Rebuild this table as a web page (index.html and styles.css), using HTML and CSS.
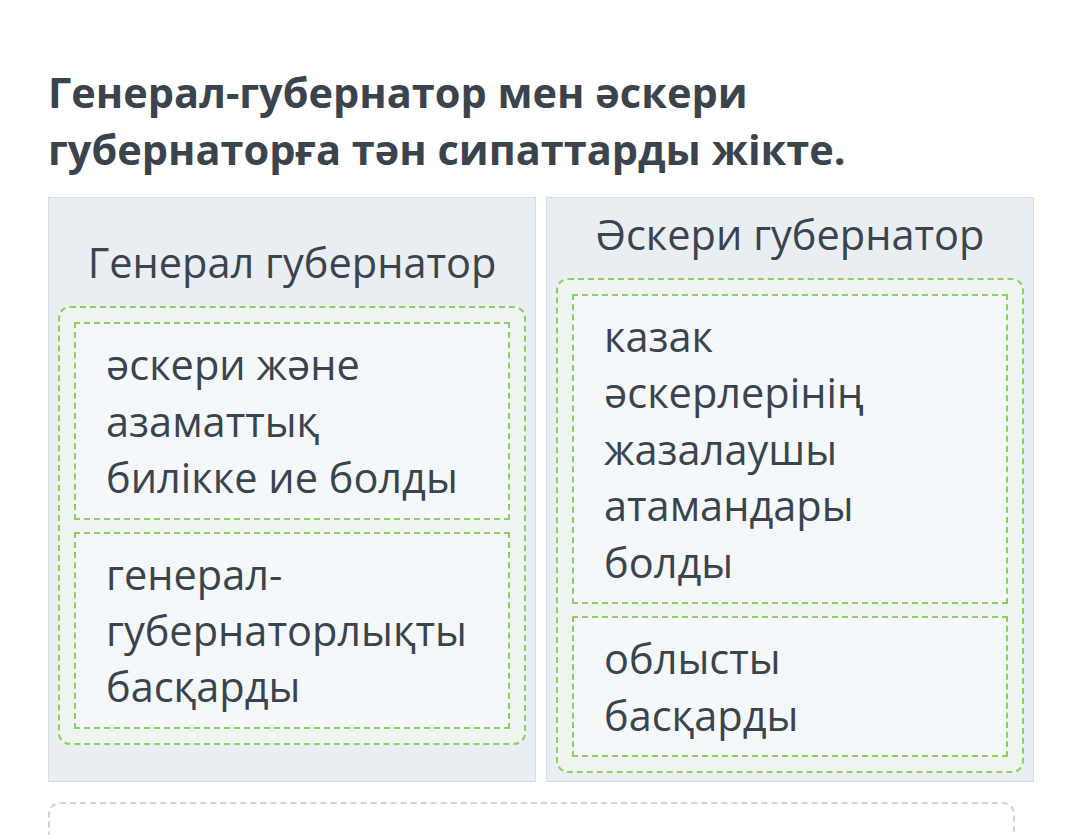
FILE: index.html
```html
<!DOCTYPE html>
<html lang="kk">
  <head>
    <meta charset="UTF-8" />
    <meta name="viewport" content="width=device-width, initial-scale=1.0" />
    <title>Жікте</title>
    <link rel="stylesheet" href="styles.css">
  </head>
  <body>
    <div class="page">
      <h1 class="question">Генерал-губернатор мен әскери губернаторға тән сипаттарды жікте.</h1>

      <div class="groups">
        <div class="group">
          <div class="group-title">Генерал губернатор</div>
          <div class="dropzone">
            <div class="card">әскери және азаматтық билікке ие болды</div>
            <div class="card">генерал-губернаторлықты басқарды</div>
          </div>
        </div>

        <div class="group">
          <div class="group-title">Әскери губернатор</div>
          <div class="dropzone">
            <div class="card">казак әскерлерінің жазалаушы атамандары болды</div>
            <div class="card">облысты басқарды</div>
          </div>
        </div>
      </div>

      <div class="pool"></div>
    </div>
  </body>
</html>
```

FILE: styles.css
```css
body {
  margin: 0;
  background-color: #fff;
  font-family: "Open Sans", "Noto Sans", sans-serif;
  color: #3b444c;
  overflow: hidden;
}
.page {
  padding: 64px 46px 0 48px;
}
.question {
  font-size: 41.5px;
  font-weight: 700;
  line-height: 57px;
  margin: 0 0 19px 0;
  max-width: 840px;
}
.groups {
  display: grid;
  grid-template-columns: 1fr 1fr;
  gap: 10px;
  height: 585px;
}
.group {
  display: flex;
  flex-direction: column;
  justify-content: center;
  background-color: #e8eef1;
  border: 1px solid #d6dde2;
  padding: 0 9px;
}
.group-title {
  font-size: 41.5px;
  line-height: 56px;
  text-align: center;
  padding-bottom: 16px;
}
.dropzone {
  display: flex;
  flex-direction: column;
  gap: 12px;
  padding: 14px;
  border: 2px dashed #8fcf60;
  border-radius: 12px;
  background-color: #eef5f1;
}
.card {
  font-size: 41.5px;
  line-height: 56.4px;
  padding: 12px 38px 12px 30px;
  border: 2px dashed #8fcf60;
  background-color: #f4f8fb;
}
.pool {
  margin-top: 20px;
  width: 963px;
  height: 60px;
  border: 2px dashed #cfd5d9;
  border-radius: 12px;
}
```
